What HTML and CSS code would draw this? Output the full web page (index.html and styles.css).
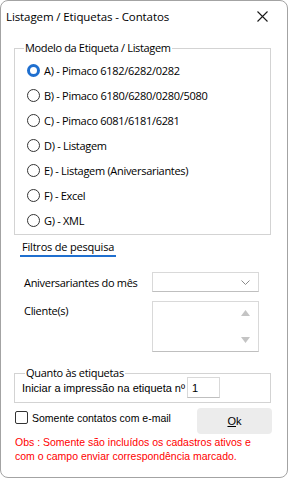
FILE: index.html
```html
<!DOCTYPE html>
<html lang="pt">
<head>
<meta charset="utf-8">
<link rel="stylesheet" href="styles.css">
</head>
<body>
<div class="window">
  <div class="titlebar">
    <span class="title">Listagem / Etiquetas - Contatos</span>
    <svg class="close" width="11" height="11" viewBox="0 0 11 11"><path d="M0.5 0.5 L10.5 10.5 M10.5 0.5 L0.5 10.5" stroke="#1a1a1a" stroke-width="1.1" fill="none"/></svg>
  </div>
  <div class="content">
    <fieldset class="group models">
      <legend>Modelo da Etiqueta / Listagem</legend>
      <div class="radio-row"><span class="radio checked"></span><span>A) - Pimaco 6182/6282/0282</span></div>
      <div class="radio-row"><span class="radio"></span><span>B) - Pimaco 6180/6280/0280/5080</span></div>
      <div class="radio-row"><span class="radio"></span><span>C) - Pimaco 6081/6181/6281</span></div>
      <div class="radio-row"><span class="radio"></span><span>D) - Listagem</span></div>
      <div class="radio-row"><span class="radio"></span><span>E) - Listagem (Aniversariantes)</span></div>
      <div class="radio-row"><span class="radio"></span><span>F) - Excel</span></div>
      <div class="radio-row"><span class="radio"></span><span>G) - XML</span></div>
    </fieldset>
    <div class="tab"><span class="tab-label">Filtros de pesquisa</span></div>
    <div class="filters">
      <div class="filter-row">
        <span class="flabel">Aniversariantes do mês</span>
        <div class="combo"><svg width="9" height="5" viewBox="0 0 9 5"><path d="M0.5 0.5 L4.5 4.5 L8.5 0.5" stroke="#8a8a8a" fill="none" stroke-width="1"/></svg></div>
      </div>
      <div class="filter-row tall">
        <span class="flabel">Cliente(s)</span>
        <div class="listbox">
          <svg class="up" width="9" height="6" viewBox="0 0 9 6"><path d="M0 6 L4.5 0 L9 6 Z" fill="#c4c4c4"/></svg>
          <svg class="down" width="9" height="6" viewBox="0 0 9 6"><path d="M0 0 L4.5 6 L9 0 Z" fill="#c4c4c4"/></svg>
        </div>
      </div>
    </div>
    <fieldset class="group labels">
      <legend>Quanto às etiquetas</legend>
      <div class="start-row"><span>Iniciar a impressão na etiqueta nº</span><div class="numbox">1</div></div>
    </fieldset>
    <div class="bottom-row">
      <div class="check-row"><span class="checkbox"></span><span class="tahoma">Somente contatos com e-mail</span></div>
      <div class="ok-btn"><span class="tahoma"><u>O</u>k</span></div>
    </div>
    <p class="obs tahoma">Obs : Somente são incluídos os cadastros ativos e com o campo enviar correspondência marcado.</p>
  </div>
</div>
</body>
</html>
```

FILE: styles.css
```css
html, body { margin: 0; padding: 0; background: #fff; }
body { font-family: "Open Sans", "Noto Sans", sans-serif; font-size: 11px; color: #000; }
.window {
  width: 288px; height: 478px; box-sizing: border-box;
  border: 1px solid #a3a3a3; border-radius: 8px; background: #fff;
  overflow: hidden;
}
.titlebar {
  height: 31px; display: flex; align-items: center; justify-content: space-between;
  padding: 0 19px 0 5px;
}
.title { font-size: 11.5px; letter-spacing: -0.1px; }
.content { padding: 0 16px 0 13px; }
fieldset.group {
  margin: 0; border: 1px solid #d3d3d3; padding: 0; min-width: 0; box-sizing: border-box;
}
fieldset.group legend { padding: 0 1px; line-height: 14px; }
fieldset.models { margin-top: 9px; padding: 3px 0 0 12px; height: 194px; }
fieldset.models legend { letter-spacing: -0.35px; margin-left: -3px; }
.radio-row { display: flex; align-items: center; height: 25px; gap: 4px; letter-spacing: -0.3px; }
.radio {
  width: 13px; height: 13px; box-sizing: border-box; border-radius: 50%;
  border: 1px solid #333; background: #fff;
}
.radio.checked { border: 3.5px solid #1f6fcf; }
.tab { padding: 4px 0 0 6px; }
.tab-label { display: inline-block; padding: 0 2px 1px; border-bottom: 2px solid #1f6fcf; line-height: 15px; letter-spacing: -0.2px; }
.filters { padding: 15px 0 0 10px; }
.filter-row { display: flex; justify-content: space-between; width: 235px; }
.flabel { padding-top: 3px; line-height: 15px; letter-spacing: -0.3px; }
.filter-row.tall .flabel { padding-top: 2px; }
.combo {
  width: 107px; height: 20px; box-sizing: border-box; border: 1px solid #d9d9d9;
  border-bottom-color: #bfbfbf; display: flex; align-items: center; justify-content: flex-end; padding-right: 8px;
}
.filter-row.tall { margin-top: 9px; }
.listbox {
  width: 107px; height: 51px; box-sizing: border-box; border: 1px solid #d9d9d9; border-bottom-color: #bfbfbf;
  display: flex; flex-direction: column; align-items: flex-end; justify-content: space-between; padding: 8px 8px 8px 0;
}
fieldset.labels { margin-top: 14px; height: 37px; padding: 0 0 0 7px; }
fieldset.labels legend { margin-left: 3px; letter-spacing: -0.3px; }
.start-row { display: flex; align-items: center; gap: 2px; margin-top: -3px; }
.start-row span { font-family: "Liberation Sans", Tahoma, sans-serif; font-size: 11px; }
.numbox {
  width: 33px; height: 21px; box-sizing: border-box; border: 1px solid #d9d9d9; border-bottom-color: #bfbfbf;
  padding: 3px 0 0 4px; font-family: "Liberation Sans", sans-serif; font-size: 11px; line-height: 14px;
}
.tahoma { font-family: "Liberation Sans", Tahoma, sans-serif; font-size: 10.5px; }
.bottom-row { display: flex; justify-content: space-between; align-items: flex-start; margin-top: 5px; }
.check-row { display: flex; align-items: center; gap: 4px; margin-top: 3px; margin-left: 1px; height: 13px; }
.checkbox { width: 13px; height: 13px; box-sizing: border-box; border: 1px solid #333; border-radius: 2px; }
.ok-btn {
  width: 75px; height: 26px; background: #ececec; border-radius: 4px;
  display: flex; align-items: center; justify-content: center; margin-right: -1px;
}
.ok-btn .tahoma { font-size: 11px; }
.obs { color: #ff0000; margin: 1px 0 0 1px; line-height: 14px; width: 250px; }
```
